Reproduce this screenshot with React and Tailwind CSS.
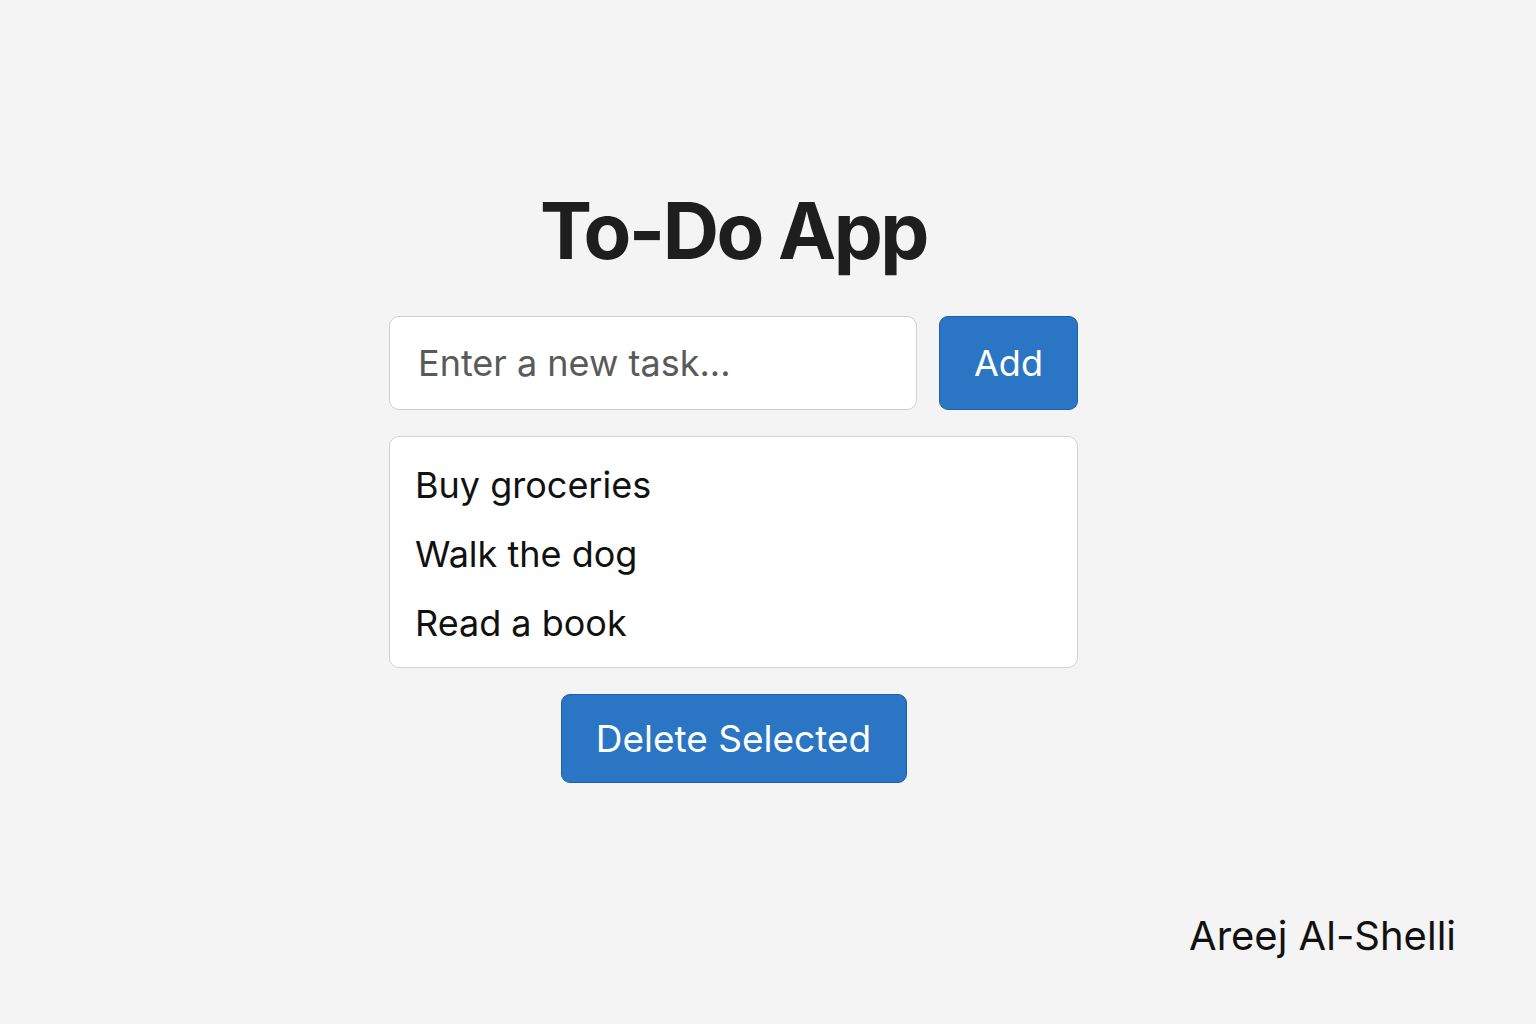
import React, { useState } from 'react';

const App = () => {
  const [tasks] = useState(['Buy groceries', 'Walk the dog', 'Read a book']);
  const [text, setText] = useState('');

  return (
    <div
      className="min-h-screen h-[1024px] bg-[#f4f4f4] flex flex-col text-[#1a1a1a]"
      style={{ fontFamily: 'Inter, "Noto Sans", sans-serif' }}
    >
      <main className="flex flex-col items-center pt-[192px] pr-[69px]">
        <h1 className="text-[78px] leading-none font-bold tracking-[-2.5px] text-[#1e1e1e]">
          To-Do App
        </h1>

        <div className="w-[689px] mt-[46px]">
          {/* INPUT ROW */}
          <div className="flex gap-[22px]">
            <input
              className="w-[528px] min-w-0 h-[94px] bg-white border border-[#cfcfcf] rounded-[10px] px-[28px] text-[36px] text-[#333] placeholder:text-[#5a5a5a] outline-none"
              placeholder="Enter a new task..."
              value={text}
              onChange={(e) => setText(e.target.value)}
            />
            <button className="w-[139px] shrink-0 h-[94px] bg-[#2a76c4] border border-[#1c5fae] rounded-[9px] text-white text-[36px]">
              Add
            </button>
          </div>

          {/* TASK LIST */}
          <ul className="mt-[26px] bg-white border border-[#d2d2d2] rounded-[10px] px-[25px] pt-[13px] pb-[10px]">
            {tasks.map((t, i) => (
              <li key={i} className="h-[69px] flex items-center text-[36px] text-[#111]">
                {t}
              </li>
            ))}
          </ul>
        </div>

        <button className="mt-[26px] w-[346px] h-[89px] bg-[#2a76c4] border border-[#1c5fae] rounded-[9px] text-white text-[37px]">
          Delete Selected
        </button>
      </main>

      <footer className="mt-auto flex justify-end pr-[80px] pb-[58px]">
        <span className="text-[40px] text-[#111]">Areej Al-Shelli</span>
      </footer>
    </div>
  );
};

export default App;
